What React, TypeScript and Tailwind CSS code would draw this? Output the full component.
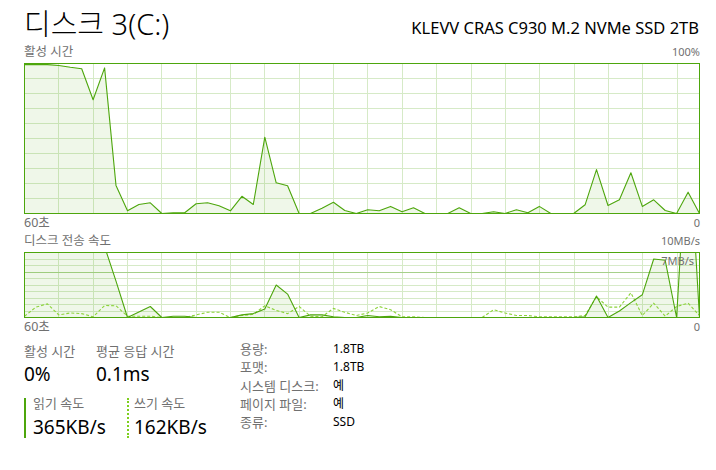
import React, { useId } from 'react';

const GREEN = '#4da60c';
const WRITE_GREEN = '#8cd33a';
const GRID = '#d6eac7';
const W = 676;

// 60 samples, one per second, oldest first
const activeTime = [
  99.3, 99.3, 99.3, 98.7, 97.5, 96.5, 75.8, 97.1, 18.7, 1.8, 6, 7.1, 0, 0.5, 0.5, 6.5, 7.1, 5.1, 1.8, 11.5,
  6, 50.9, 20.5, 18.5, 0, 0, 3.5, 7.5, 2, 0, 2.5, 1.8, 4.7, 1.1, 3.8, 0, 0, 0, 3.8, 0,
  0, 1.1, 0, 2.5, 0.5, 4.7, 0, 0, 0, 5.8, 29.3, 5.3, 9.1, 27.1, 4.7, 9.1, 2, 0, 14.2, 0,
];

const readRate = [
  12, 12, 12, 12, 12, 12, 12, 10.9, 5.6, 0, 0.85, 1.7, 0, 0.2, 0.2, 0, 0, 0, 0, 0.4,
  0.6, 1.3, 5, 3.6, 0, 0.4, 0.4, 0.1, 0, 0, 0.3, 0.1, 0.2, 0, 0, 0, 0, 0, 0, 0,
  0, 0, 0, 0, 0, 0, 0, 0, 0, 0.1, 3.3, 0, 1, 2.3, 3.5, 9, 8.8, 0, 30, 0,
];

const writeRate = [
  0.2, 1.6, 2.1, 0.4, 0.7, 0.6, 0.1, 1.85, 1.8, 0.2, 0.2, 0.2, 0, 0, 0, 0.4, 0.8, 0.8, 0, 0.3,
  0.5, 1.8, 1.1, 0.6, 1.7, 0.2, 0.1, 1.4, 0.8, 0.3, 0.7, 1.7, 1.2, 0.1, 0.1, 0, 0, 0, 0, 0,
  0, 1.2, 0.7, 0.3, 0.3, 0.1, 0.1, 0.1, 0.1, 0.3, 3.2, 1.6, 1.6, 3.8, 0.3, 2.2, 0.2, 1.7, 2.2, 0.3,
];

interface PerfChartProps {
  height: number;
  rows: number;
  max: number;
  solid: number[];
  dashed?: number[];
  refLine?: number;
}

const PerfChart: React.FC<PerfChartProps> = ({ height, rows, max, solid, dashed, refLine }) => {
  const clipId = useId();
  const inner = W - 1;
  const h = height - 1;
  const step = inner / (solid.length - 1);
  const px = (i: number) => 0.5 + i * step;
  const py = (v: number) => 0.5 + h * (1 - v / max);
  const pts = (d: number[]) => d.map((v, i) => `${px(i).toFixed(1)},${py(v).toFixed(1)}`).join(' ');

  const cols = Array.from({ length: 19 }, (_, k) => Math.round(34.3 + 34.35 * k) + 0.5);
  const rowLines = Array.from({ length: rows - 1 }, (_, j) => Math.round((h * (j + 1)) / rows) + 0.5);

  return (
    <svg width={W} height={height} className="block">
      <defs>
        <clipPath id={clipId}>
          <rect x={0.5} y={0.5} width={inner} height={h} />
        </clipPath>
      </defs>
      {rowLines.map((y) => (
        <line key={`r${y}`} x1={0} x2={W} y1={y} y2={y} stroke={GRID} strokeWidth={1} />
      ))}
      {cols.map((x) => (
        <line key={`c${x}`} x1={x} x2={x} y1={0} y2={height} stroke={GRID} strokeWidth={1} />
      ))}
      {refLine !== undefined && (
        <line
          x1={0}
          x2={W}
          y1={Math.round(py(refLine)) + 0.5}
          y2={Math.round(py(refLine)) + 0.5}
          stroke="#a6d08a"
          strokeWidth={1.2}
        />
      )}
      <g clipPath={`url(#${clipId})`}>
        <polygon
          points={`0.5,${h + 0.5} ${pts(solid)} ${inner + 0.5},${h + 0.5}`}
          fill={GREEN}
          fillOpacity={0.09}
        />
        {dashed && (
          <polyline points={pts(dashed)} fill="none" stroke={WRITE_GREEN} strokeWidth={1.1} strokeDasharray="3 2" />
        )}
        <polyline points={pts(solid)} fill="none" stroke={GREEN} strokeWidth={1.1} strokeLinejoin="round" />
      </g>
      <rect x={0.5} y={0.5} width={inner} height={h} fill="none" stroke={GREEN} strokeWidth={1} />
    </svg>
  );
};

const AxisRow: React.FC<{ left: string; right: string; className?: string }> = ({ left, right, className }) => (
  <div className={`flex justify-between items-center text-[#707070] ${className ?? ''}`}>
    <span className="text-[12.5px]">{left}</span>
    <span className="text-[11px]">{right}</span>
  </div>
);

// read / write rate block with the coloured bar on its left
const RateStat: React.FC<{ label: string; value: string; className: string }> = ({ label, value, className }) => (
  <div className={`h-[40px] flex flex-col ${className}`}>
    <div className="text-[13px] leading-[8px] h-[8px] mt-px text-[#707070]">{label}</div>
    <div className="text-[19px] leading-[20px] mt-[10px]">{value}</div>
  </div>
);

const details: [string, string][] = [
  ['용량:', '1.8TB'],
  ['포맷:', '1.8TB'],
  ['시스템 디스크:', '예'],
  ['페이지 파일:', '예'],
  ['종류:', 'SSD'],
];

export default function App() {
  return (
    <div className="w-[716px] h-[470px] bg-white pl-6 pr-4 text-black font-['Noto_Sans','Noto_Sans_CJK_KR',sans-serif] overflow-hidden">
      <div className="flex justify-between items-start h-[44px]">
        <h1 className="text-[29px] leading-[29px] mt-[9px] font-light">디스크 3(C:)</h1>
        <div className="text-[16.5px] leading-[17px] mt-[19px] mr-px">KLEVV CRAS C930 M.2 NVMe SSD 2TB</div>
      </div>

      <AxisRow left="활성 시간" right="100%" className="h-[19px] pb-[4px] leading-[15px]" />
      <PerfChart height={151} rows={10} max={100} solid={activeTime} />
      <AxisRow left="60초" right="0" className="h-[18px] leading-[18px]" />

      <AxisRow left="디스크 전송 속도" right="10MB/s" className="h-[20px] pb-[2px] leading-[18px]" />
      <div className="relative">
        <PerfChart height={66} rows={10} max={10} solid={readRate} dashed={writeRate} refLine={7} />
        <span className="absolute right-[6px] top-[2px] text-[11px] leading-[14px] text-[#707070]">7MB/s</span>
      </div>
      <AxisRow left="60초" right="0" className="h-[18px] leading-[18px]" />

      <div className="flex mt-[6px]">
        <div className="w-[216px]">
          <div className="flex">
            <div className="w-[72px]">
              <div className="text-[13px] leading-[18px] text-[#707070]">활성 시간</div>
              <div className="text-[19px] leading-[28px]">0%</div>
            </div>
            <div>
              <div className="text-[13px] leading-[18px] text-[#707070]">평균 응답 시간</div>
              <div className="text-[19px] leading-[28px]">0.1ms</div>
            </div>
          </div>
          <div className="flex mt-[10px]">
            <RateStat label="읽기 속도" value="365KB/s" className="w-[103px] border-l-2 border-[#4da60c] pl-[7px]" />
            <RateStat label="쓰기 속도" value="162KB/s" className="border-l-2 border-dotted border-[#7ecf1e] pl-[5px]" />
          </div>
        </div>
        <div className="grid grid-cols-[93px_auto] leading-[18.3px] -mt-[2px] h-fit">
          {details.map(([k, v]) => (
            <React.Fragment key={k}>
              <span className="text-[13px] text-[#707070]">{k}</span>
              <span className="text-[12px]">{v}</span>
            </React.Fragment>
          ))}
        </div>
      </div>
    </div>
  );
}
